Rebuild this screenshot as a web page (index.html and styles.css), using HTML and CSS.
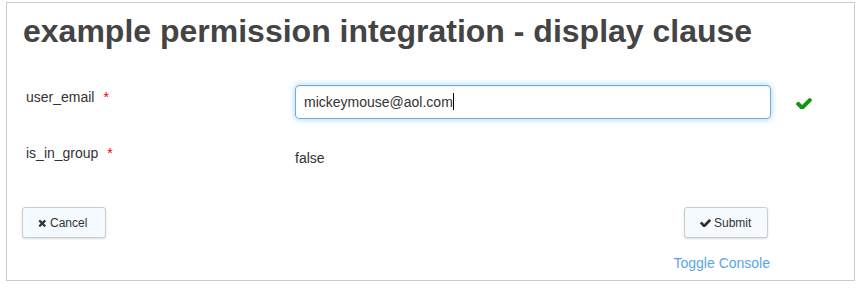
FILE: index.html
```html
<!DOCTYPE html>
<html lang="en">
<head>
    <meta charset="UTF-8">
    <title>example permission integration - display clause</title>
    <link rel="stylesheet" href="styles.css">
</head>
<body>

<div class="panel">
    <h1>example permission integration - display clause</h1>

    <div class="form-row first">
        <label class="field-label">user_email <span class="required">*</span></label>
        <div class="field-input">
            <div class="text-input">mickeymouse@aol.com<span class="caret"></span></div>
        </div>
        <div class="field-status">
            <svg class="valid-icon" viewBox="120 360 1552 1030" width="16" height="11">
                <path d="M1671 566q0 40-28 68l-724 724-136 136q-28 28-68 28t-68-28l-136-136-362-362q-28-28-28-68t28-68l136-136q28-28 68-28t68 28l294 295 656-657q28-28 68-28t68 28l136 136q28 28 28 68z"/>
            </svg>
        </div>
    </div>

    <div class="form-row">
        <label class="field-label">is_in_group <span class="required">*</span></label>
        <div class="field-value">false</div>
    </div>

    <div class="actions">
        <button class="btn">
            <svg viewBox="218 238 1272 1316" width="8" height="8">
                <path d="M1490 1322q0 40-28 68l-136 136q-28 28-68 28t-68-28l-294-294-294 294q-28 28-68 28t-68-28l-136-136q-28-28-28-68t28-68l294-294-294-294q-28-28-28-68t28-68l136-136q28-28 68-28t68 28l294 294 294-294q28-28 68-28t68 28l136 136q28 28 28 68t-28 68l-294 294 294 294q28 28 28 68z"/>
            </svg>
            Cancel
        </button>
        <div class="right-actions">
            <button class="btn btn-submit">
                <svg viewBox="120 360 1552 1030" width="11" height="8">
                    <path d="M1671 566q0 40-28 68l-724 724-136 136q-28 28-68 28t-68-28l-136-136-362-362q-28-28-28-68t28-68l136-136q28-28 68-28t68 28l294 295 656-657q28-28 68-28t68 28l136 136q28 28 28 68z"/>
                </svg>
                Submit
            </button>
            <a class="console-link" href="#">Toggle Console</a>
        </div>
    </div>
</div>

</body>
</html>
```

FILE: styles.css
```css
body {
    margin: 0;
    font-family: "Liberation Sans", Arial, sans-serif;
    font-size: 14px;
    color: #333;
    background: #fff;
}

.panel {
    margin: 2px 2px 0 6px;
    height: 277px;
    border: 1px solid #ccc;
    padding: 0 16px;
}

h1 {
    margin: 11px 0 0;
    font-size: 32px;
    line-height: 35px;
    font-weight: bold;
    color: #444;
}

.form-row {
    display: grid;
    grid-template-columns: 272px 476px 40px;
    margin-top: 22px;
}

.form-row.first {
    margin-top: 36px;
}

.field-label {
    padding: 2px 0 0 3px;
    line-height: 20px;
}

.required {
    color: #e00;
    margin-left: 5px;
}

.text-input {
    height: 32px;
    border: 1px solid #66afe9;
    border-radius: 4px;
    padding: 0 8px;
    line-height: 32px;
    box-shadow: inset 0 1px 1px rgba(0, 0, 0, 0.075), 0 0 6px rgba(102, 175, 233, 0.6);
    color: #333;
}

.caret {
    display: inline-block;
    width: 1px;
    height: 17px;
    background: #000;
    vertical-align: -3px;
}

.field-status {
    padding: 11px 0 0 25px;
}

.valid-icon {
    fill: #129512;
}

.field-value {
    padding-top: 7px;
    line-height: 20px;
}

.actions {
    display: flex;
    justify-content: space-between;
    margin-top: 39px;
}

.right-actions {
    display: flex;
    flex-direction: column;
    align-items: flex-end;
    margin-right: 68px;
}

.btn {
    display: flex;
    align-items: center;
    gap: 4px;
    box-sizing: border-box;
    width: 84px;
    height: 31px;
    margin-left: -1px;
    padding: 0 0 0 15px;
    font-family: "Liberation Sans", Arial, sans-serif;
    font-size: 12px;
    color: #333;
    background: #f5faff;
    border: 1px solid #ccc;
    border-radius: 3px;
    box-shadow: 0 1px 2px rgba(0, 0, 0, 0.15);
    cursor: pointer;
}

.btn svg {
    fill: #333;
}

.btn-submit {
    gap: 3px;
    margin-right: 2px;
}

.console-link {
    margin-top: 17px;
    color: #5aa5ea;
    text-decoration: none;
    line-height: 16px;
}
```
